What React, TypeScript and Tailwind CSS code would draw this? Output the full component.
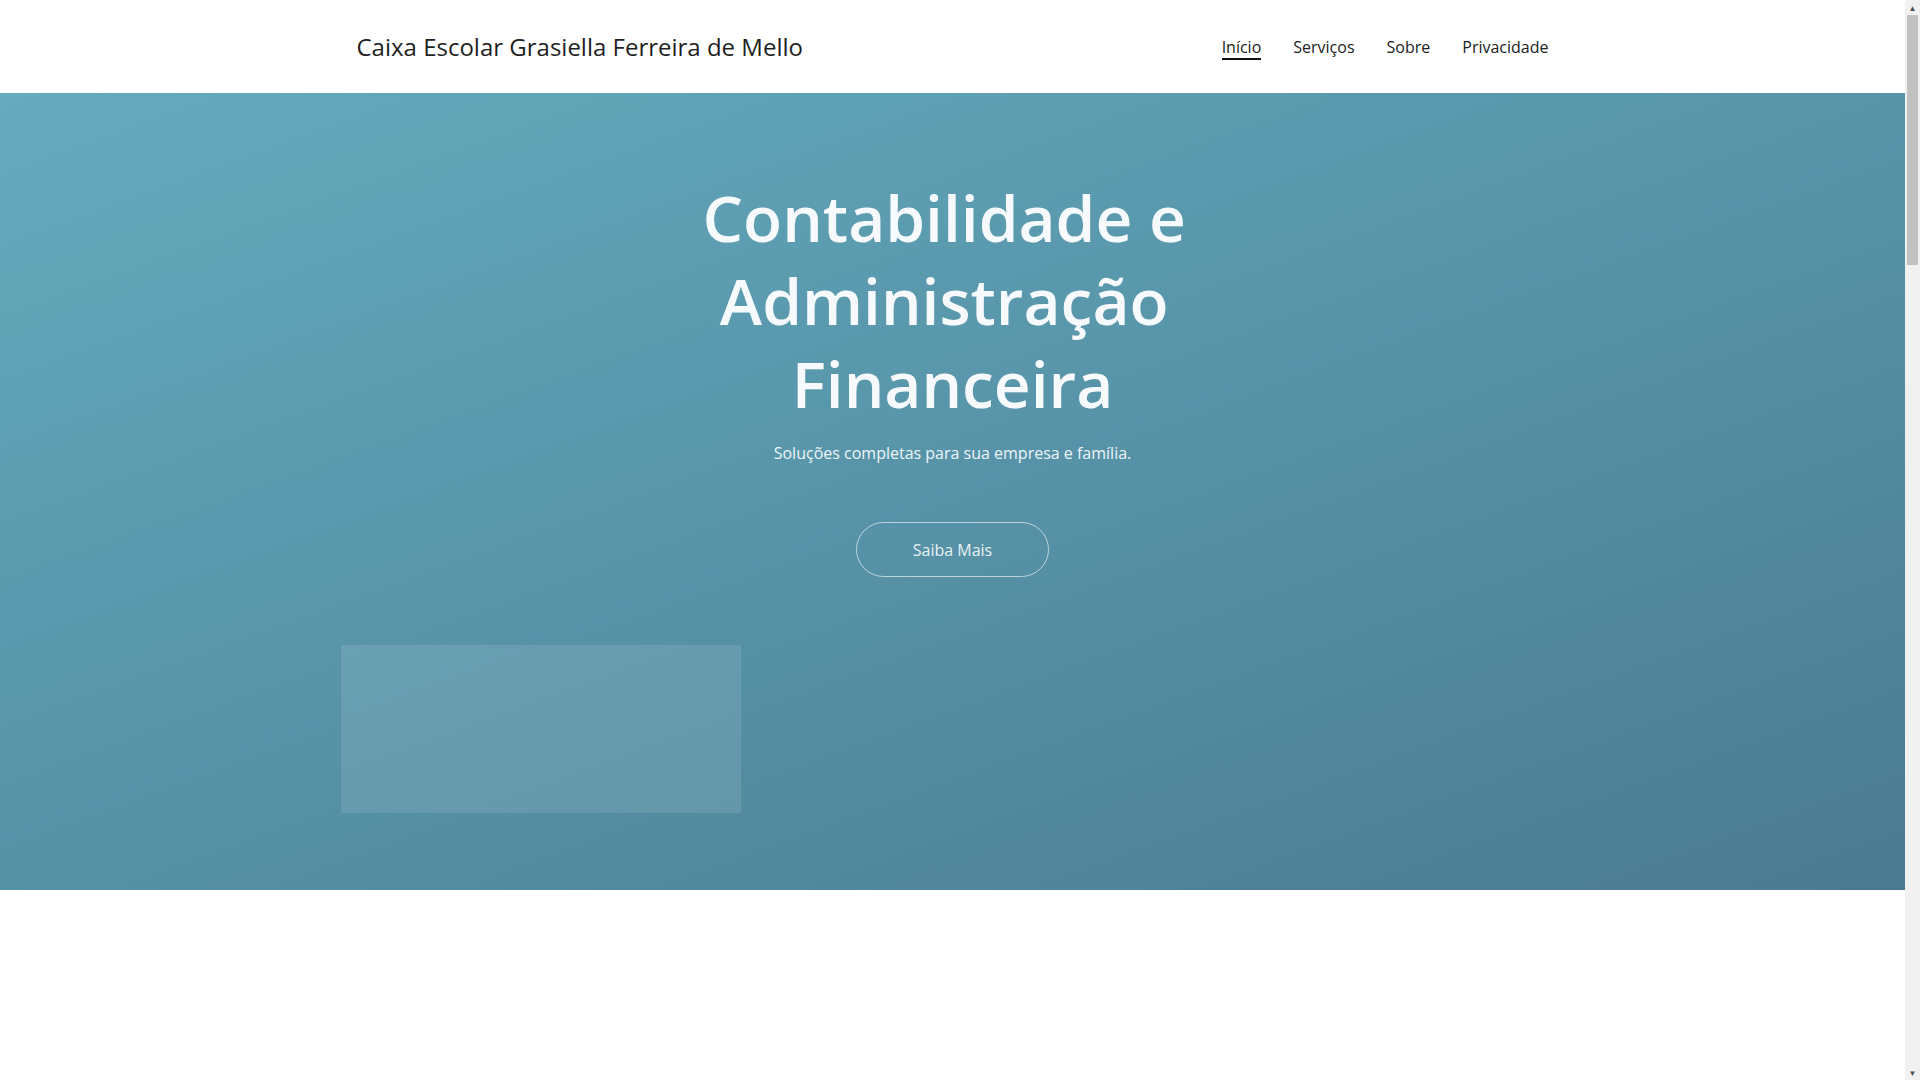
import React from "react";

export default function App() {
  return (
    <div className="flex h-screen overflow-hidden bg-white" style={{ fontFamily: '"Open Sans", sans-serif' }}>
      <main className="flex-1">
        <header className="h-[93px] bg-white">
          <div className="mx-auto flex h-full w-[1224px] items-center justify-between px-4">
            <div className="text-[24px] text-[#1f1f1f]">Caixa Escolar Grasiella Ferreira de Mello</div>
            <nav className="flex items-center gap-8 text-[16px] text-[#222]">
              <a className="relative">
                Início
                <span className="absolute bottom-[-1px] left-0 right-0 h-[2px] bg-[#111]" />
              </a>
              <a>Serviços</a>
              <a>Sobre</a>
              <a>Privacidade</a>
            </nav>
          </div>
        </header>
        <section className="h-[797px] bg-[linear-gradient(160deg,#64abbd_0%,#5793a8_50%,#4a7a92_100%)]">
          <div className="mx-auto flex w-[1224px] flex-col items-center pt-[83px]">
            <h1 className="text-center text-[64px] font-semibold leading-[83px] text-[#f7fafc]">
              Contabilidade e{"\u00a0"}
              <br />
              Administração{"\u00a0"}
              <br />
              Financeira
            </h1>
            <p className="mt-[16px] text-[16px] text-[#eef5f8]">Soluções completas para sua empresa e família.</p>
            <button className="mt-[57px] h-[55px] w-[193px] rounded-full border border-white/60 text-[16px] text-[#e8f1f4]">
              Saiba Mais
            </button>
            <div className="mt-[68px] h-[168px] w-[400px] self-start bg-white/10" />
          </div>
        </section>
      </main>
      <aside className="flex w-[15px] flex-col bg-[#f1f1f1]">
        <div className="flex h-[15px] items-center justify-center text-[8px] leading-none text-[#505050]">▲</div>
        <div className="mx-[2px] h-[250px] rounded-[1px] bg-[#c1c1c1]" />
        <div className="flex-1" />
        <div className="flex h-[15px] items-center justify-center text-[8px] leading-none text-[#505050]">▼</div>
      </aside>
    </div>
  );
}
